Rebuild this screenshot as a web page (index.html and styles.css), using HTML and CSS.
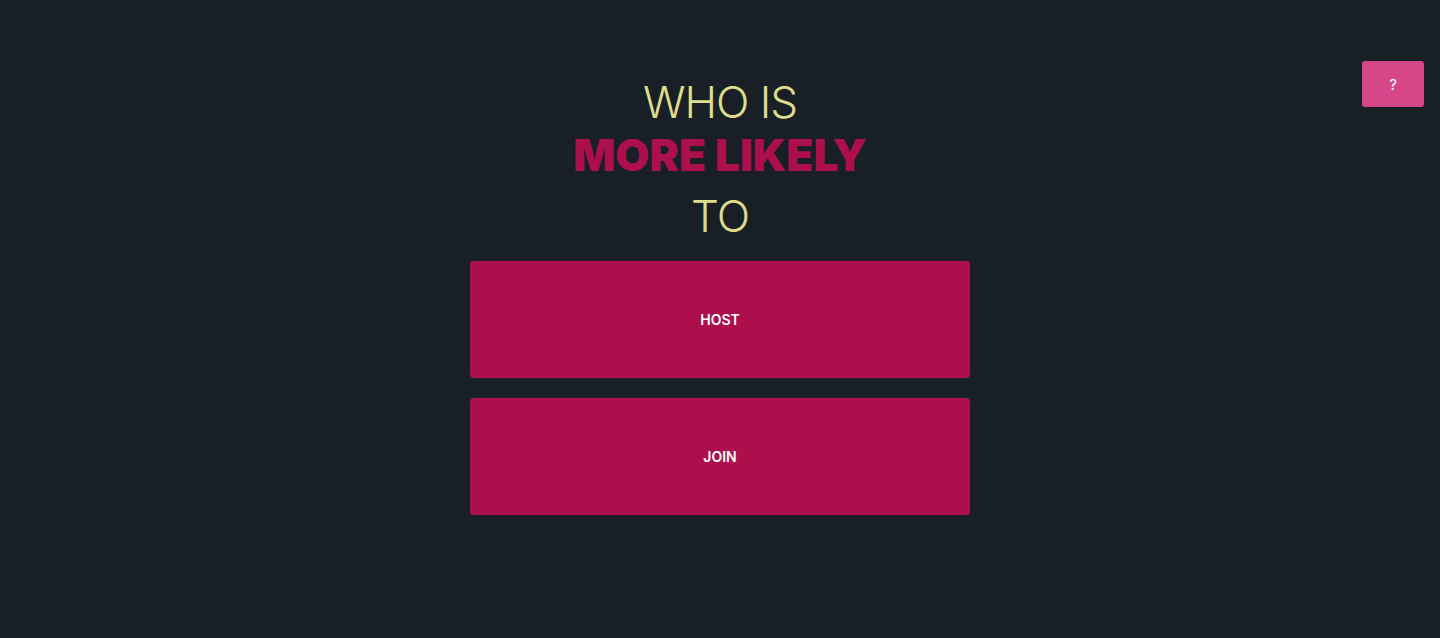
FILE: index.html
```html
<!DOCTYPE html>
<html lang="en">
<head>
<meta charset="utf-8">
<title>Who is more likely to</title>
<link rel="stylesheet" href="styles.css">
</head>
<body>
<button class="help">?</button>
<main class="home">
  <h1 class="title">
    <span class="title-line title-light">WHO IS</span>
    <span class="title-line title-bold">MORE LIKELY</span>
    <span class="title-line title-light title-last">TO</span>
  </h1>
  <div class="actions">
    <button class="action">HOST</button>
    <button class="action">JOIN</button>
  </div>
</main>
</body>
</html>
```
FILE: styles.css
```css
html, body {
  margin: 0;
  padding: 0;
  height: 100%;
}
body {
  background: #181f27;
  font-family: Inter, "Noto Sans", sans-serif;
  overflow: hidden;
}
.help {
  position: absolute;
  top: 61px;
  right: 16px;
  width: 62px;
  height: 46px;
  border: none;
  border-radius: 3px;
  background: #d6478a;
  color: #ffffff;
  font-family: Inter, sans-serif;
  font-size: 15px;
  font-weight: 400;
  cursor: pointer;
}
.home {
  display: flex;
  flex-direction: column;
  align-items: center;
  padding-top: 76px;
}
.title {
  margin: 0;
  display: flex;
  flex-direction: column;
  align-items: center;
  font-size: 44px;
  line-height: 53px;
  font-weight: 400;
}
.title-light {
  color: #dfdc8b;
  font-weight: 350;
  letter-spacing: -1px;
}
.title-bold {
  color: #ad0f4d;
  font-weight: 900;
  letter-spacing: 0.1px;
}
.title-last {
  margin-top: 8px;
}
.actions {
  margin-top: 18px;
  display: flex;
  flex-direction: column;
  gap: 20px;
}
.action {
  width: 500px;
  height: 117px;
  border: none;
  border-radius: 4px;
  background: #ad0f4d;
  color: #ffffff;
  font-family: Inter, sans-serif;
  font-size: 14px;
  font-weight: 600;
  cursor: pointer;
}
```
